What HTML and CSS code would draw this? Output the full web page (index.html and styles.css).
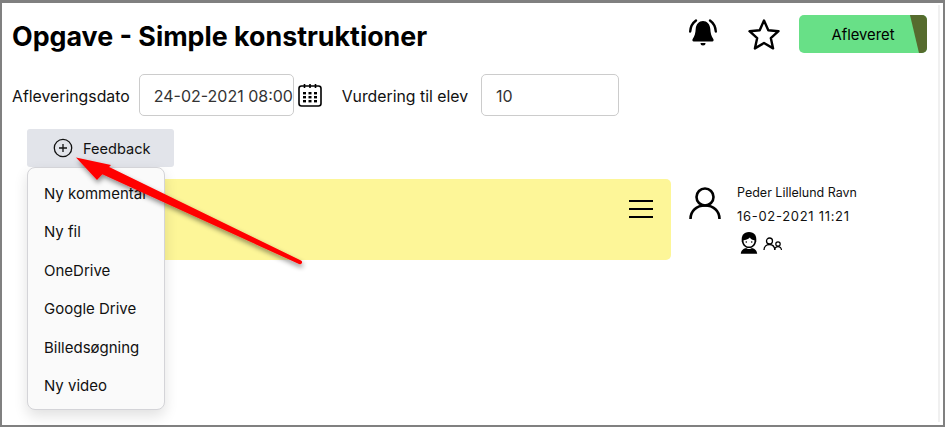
FILE: index.html
```html
<!DOCTYPE html>
<html lang="da">
<head>
<meta charset="utf-8">
<title>Opgave</title>
<link rel="stylesheet" href="styles.css">
</head>
<body>
<div class="frame">
  <main class="page">
    <header class="top">
      <h1 class="title">Opgave - Simple konstruktioner</h1>
      <div class="actions">
        <svg class="ic-bell" viewBox="0 0 32 32" aria-hidden="true">
          <path d="M16 3c-4 0-7 3-7.300 8-.2 4-1 7-3 10-.7 1.100-.2 2.500 1 2.500h18.600c1.200 0 1.700-1.400 1-2.500-2-3-2.800-6-3-10C23 6 20 3 16 3z" fill="#000"/>
          <path d="M13.500 25h5a2.500 2.500 0 0 1-5 0z" fill="#000"/>
          <path d="M3.200 13.500C3.500 9 5.500 5 9 2.500M28.800 13.500C28.500 9 26.500 5 23 2.500" fill="none" stroke="#000" stroke-width="2.400" stroke-linecap="round"/>
        </svg>
        <svg class="ic-star" viewBox="0 0 34 32" aria-hidden="true">
          <path d="M17 2.500l4.300 9.700 10.200 1-7.700 6.900 2.300 10.300L17 25l-9.100 5.400 2.300-10.300L2.500 13.200l10.200-1z" fill="none" stroke="#000" stroke-width="2.400" stroke-linejoin="round"/>
        </svg>
        <button class="status" type="button"><span class="status-text">Afleveret</span></button>
      </div>
    </header>

    <div class="fields">
      <label class="lbl">Afleveringsdato</label>
      <div class="input date">24-02-2021 08:00</div>
      <svg class="ic-cal" viewBox="0 0 24 24" aria-hidden="true">
        <rect x="1" y="3" width="22" height="20" rx="2.500" fill="none" stroke="#000" stroke-width="1.600"/>
        <path d="M6.500 1v4M12 1v4M17.500 1v4" stroke="#000" stroke-width="1.600" fill="none"/>
        <g class="cal-dots">
          <rect x="5" y="9" width="3" height="2.400"/><rect x="10.500" y="9" width="3" height="2.400"/><rect x="16" y="9" width="3" height="2.400"/>
          <rect x="5" y="13" width="3" height="2.400"/><rect x="10.500" y="13" width="3" height="2.400"/><rect x="16" y="13" width="3" height="2.400"/>
          <rect x="5" y="17" width="3" height="2.400"/><rect x="10.500" y="17" width="3" height="2.400"/><rect x="16" y="17" width="3" height="2.400"/>
        </g>
      </svg>
      <label class="lbl grade-lbl">Vurdering til elev</label>
      <div class="input grade">10</div>
    </div>

    <div class="feedback-row">
      <button class="feedback" type="button">
        <svg class="ic-plus" viewBox="0 0 20 20" aria-hidden="true">
          <circle cx="10" cy="10" r="8.700" fill="none" stroke="#111" stroke-width="1.300"/>
          <path d="M10 6v8M6 10h8" stroke="#111" stroke-width="1.300"/>
        </svg>
        <span class="feedback-text">Feedback</span>
      </button>
    </div>

    <section class="content">
      <div class="note">
        <svg class="ic-menu" viewBox="0 0 24 18" aria-hidden="true">
          <path d="M0 1h24M0 9h24M0 17h24" stroke="#000" stroke-width="2"/>
        </svg>
      </div>
      <aside class="author">
        <svg class="ic-user" viewBox="0 0 32 34" aria-hidden="true">
          <circle cx="16" cy="11" r="8.500" fill="none" stroke="#000" stroke-width="2.600"/>
          <path d="M1.500 33c0-8 6-13.500 14.500-13.500S30.500 25 30.500 33" fill="none" stroke="#000" stroke-width="2.600"/>
        </svg>
        <div class="meta">
          <div class="name">Peder Lillelund Ravn</div>
          <div class="when">16-02-2021 11:21</div>
          <div class="badges">
            <svg class="ic-kid" viewBox="0 0 22 25" aria-hidden="true">
              <path d="M11 1C5 1 2.500 5 3 11c1 5 4 7.500 8 7.500s7-2.500 8-7.500c.5-6-2-10-8-10z" fill="#000"/>
              <path d="M5 10c2 0 5-1 7-3 1 2 3 3 5 3 .3 4-2.500 7-6 7s-6.300-3-6-7z" fill="#fff"/>
              <circle cx="8" cy="12" r=".9" fill="#000"/><circle cx="14" cy="12" r=".9" fill="#000"/>
              <path d="M2 25c0-4 3.500-6 6-6.500 1 1.500 5 1.500 6 0 2.500.5 6 2.500 6 6.500z" fill="#000"/>
            </svg>
            <svg class="ic-group" viewBox="0 0 20 14" aria-hidden="true">
              <circle cx="6.500" cy="4" r="3" fill="none" stroke="#000" stroke-width="1.300"/>
              <path d="M1 13c0-3.500 2.500-5.500 5.500-5.500s5 2 5.500 5.500" fill="none" stroke="#000" stroke-width="1.300"/>
              <circle cx="15" cy="7" r="2.200" fill="none" stroke="#000" stroke-width="1.200"/>
              <path d="M11.500 13c.3-2 1.700-3.300 3.500-3.300s3.200 1.300 3.500 3.300" fill="none" stroke="#000" stroke-width="1.200"/>
            </svg>
          </div>
        </div>
      </aside>
    </section>

    <ul class="menu">
      <li>Ny kommentar</li>
      <li>Ny fil</li>
      <li>OneDrive</li>
      <li>Google Drive</li>
      <li>Billedsøgning</li>
      <li>Ny video</li>
    </ul>

    <svg class="arrow" viewBox="0 0 945 427" aria-hidden="true">
      <defs>
        <filter id="sh" x="-10%" y="-10%" width="120%" height="130%">
          <feDropShadow dx="1" dy="3" stdDeviation="2.500" flood-color="#000" flood-opacity=".45"/>
        </filter>
      </defs>
      <g filter="url(#sh)">
        <path d="M104 164.500L301 260.500a2 2 0 0 1-2 3.500L98.500 172.500z" fill="#f00"/>
        <path d="M76 157.500L111 165L97 180z" fill="#f00"/>
      </g>
    </svg>
  </main>
  <div class="scroll-strip"></div>
</div>
</body>
</html>
```
FILE: styles.css
```css
* { box-sizing: border-box; }
html, body { margin: 0; padding: 0; }
body {
  width: 945px;
  height: 427px;
  overflow: hidden;
  background: #fff;
  font-family: Inter, "Liberation Sans", sans-serif;
  color: #111;
}
.frame {
  display: flex;
  width: 945px;
  height: 427px;
  border: 2px solid #808080;
  border-top-width: 3px;
  background: #fff;
}
.page {
  position: relative;
  flex: none;
  width: 936px;
  height: 100%;
  padding: 12px 10px 0 10px;
}
.scroll-strip {
  flex: none;
  width: 2px;
  margin: 2px 0 3px;
  background: #f0f0f0;
}
.top {
  display: flex;
  align-items: center;
  justify-content: space-between;
  height: 38px;
  padding-right: 1px;
}
.title {
  margin: 4px 0 0;
  font-size: 26.800px;
  font-weight: 700;
  color: #000;
  white-space: nowrap;
}
.actions { display: flex; align-items: center; }
.ic-bell { width: 32px; height: 32px; margin-right: 28px; }
.ic-star { width: 34px; height: 32px; margin-right: 18px; }
.status {
  position: relative;
  overflow: hidden;
  width: 128px;
  height: 38px;
  padding: 2px 0 0;
  border: 0;
  border-radius: 5px;
  background: #68e087;
  color: #000;
  font: 14.800px Inter, "Liberation Sans", sans-serif;
}
.status::after {
  content: "";
  position: absolute;
  inset: 0;
  background: #566b2e;
  clip-path: polygon(86.700% 0, 100% 0, 100% 100%, 93.750% 100%);
}
.fields {
  display: flex;
  align-items: center;
  height: 42px;
  margin-top: 21px;
  font-size: 15.800px;
}
.lbl { color: #111; white-space: nowrap; padding-top: 2px; }
.input {
  height: 42px;
  display: flex;
  align-items: center;
  padding-top: 2px;
  border: 1px solid #ccc;
  border-radius: 5px;
  font-size: 16px;
  color: #333;
  background: #fff;
}
.date { width: 155px; margin-left: 9px; padding-left: 14px; white-space: nowrap; }
.ic-cal { width: 24px; height: 24px; margin-left: 4px; }
.cal-dots { fill: #000; }
.grade-lbl { margin-left: 20px; }
.grade { width: 138px; margin-left: 13px; padding-left: 14px; }
.feedback-row { margin-top: 13px; padding-left: 15px; }
.feedback {
  display: flex;
  align-items: center;
  gap: 10px;
  width: 147px;
  height: 38px;
  padding: 0 0 0 26px;
  border: 0;
  border-radius: 3px;
  background: #e2e4ea;
  color: #111;
  font: 14.600px Inter, "Liberation Sans", sans-serif;
}
.feedback-text { padding-top: 2px; }
.ic-plus { width: 20px; height: 20px; }
.content {
  display: flex;
  margin-top: 12px;
  padding-left: 15px;
}
.note {
  display: flex;
  justify-content: flex-end;
  flex: none;
  width: 644px;
  height: 81px;
  padding: 21px 18px 0 0;
  background: #fdf698;
  border-radius: 5px;
}
.ic-menu { width: 24px; height: 18px; }
.author { display: flex; margin-left: 18px; }
.ic-user { width: 32px; height: 34px; margin-top: 7px; }
.meta { margin-left: 16px; font-size: 12.500px; color: #111; }
.name { margin-top: 6px; line-height: 15px; }
.when { margin-top: 9px; line-height: 15px; font-size: 13px; letter-spacing: .7px; white-space: nowrap; }
.badges { display: flex; align-items: flex-end; gap: 4px; margin-top: 6px; margin-left: 2px; }
.ic-kid { width: 20px; height: 25px; }
.ic-group { width: 20px; height: 14px; margin-bottom: 4px; }
.menu {
  position: absolute;
  left: 25px;
  top: 164px;
  width: 138px;
  height: 243px;
  margin: 0;
  padding: 6.500px 0 0 16px;
  list-style: none;
  background: #fafafa;
  border: 1px solid #d4d4d8;
  border-radius: 8px;
  box-shadow: 0 6px 14px rgba(0, 0, 0, .12);
  font-size: 15px;
  color: #111;
}
.menu li { height: 38.600px; line-height: 38.600px; white-space: nowrap; }
.arrow {
  position: absolute;
  left: -2px;
  top: -3px;
  width: 945px;
  height: 427px;
  pointer-events: none;
}
```
